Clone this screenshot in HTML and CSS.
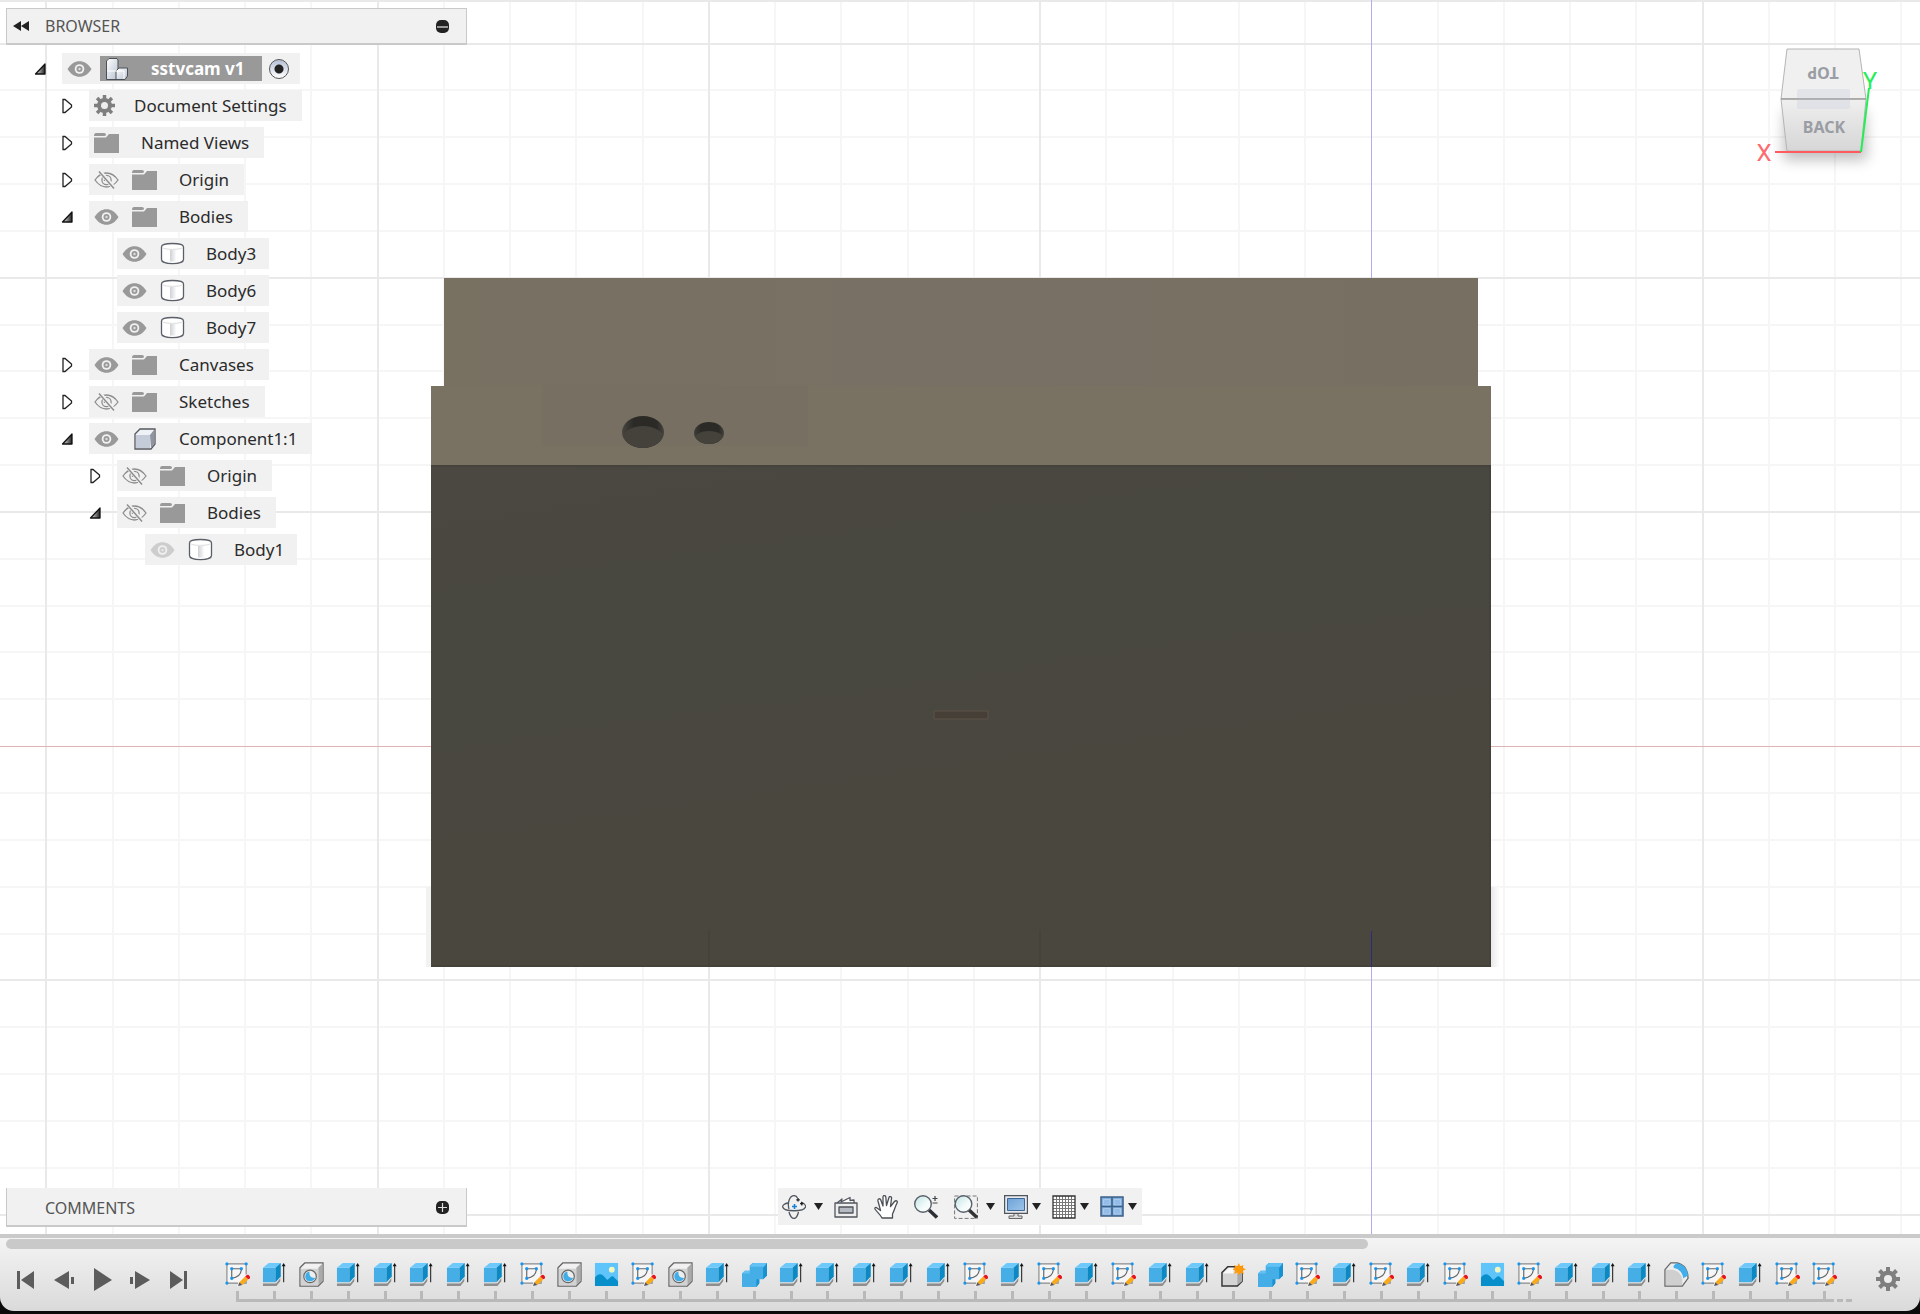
FILE: index.html
```html
<!DOCTYPE html>
<html lang="en">
<head>
<meta charset="utf-8">
<title>sstvcam v1</title>
<link rel="stylesheet" href="styles.css">
</head>
<body>
<svg class="sprite" aria-hidden="true">
  <defs>
    <linearGradient id="steel" x1="0" y1="0" x2="1" y2="1"><stop offset="0" stop-color="#fff"/><stop offset="1" stop-color="#b9c2d0"/></linearGradient>
    <linearGradient id="can" x1="0" x2="1"><stop offset="0" stop-color="#fff"/><stop offset=".25" stop-color="#fff"/><stop offset=".3" stop-color="#d0d2d6"/><stop offset=".75" stop-color="#fff"/></linearGradient>
    <linearGradient id="ink" x1="0" x2="1"><stop offset="0" stop-color="#eee"/><stop offset="1" stop-color="#222"/></linearGradient>
    <linearGradient id="screen" x1="0" y1="0" x2="1" y2="1"><stop offset="0" stop-color="#6fa3d8"/><stop offset="1" stop-color="#9cc4ea"/></linearGradient>
    <linearGradient id="lens" x1="0" y1="0" x2="1" y2="1"><stop offset="0" stop-color="#bfe3e3"/><stop offset=".6" stop-color="#f4fbfb"/><stop offset="1" stop-color="#fff"/></linearGradient>
  </defs>
  <symbol id="closed" viewBox="0 0 12 16"><path d="M2 1.500V14.500H4L10.500 9V7L4 1.500Z" fill="#fff" stroke="#222" stroke-width="1.3"/></symbol>
  <symbol id="open" viewBox="0 0 12 16"><path d="M11 3V13H1.500Z" fill="url(#ink)" stroke="#111" stroke-width="1.3" stroke-linejoin="round"/></symbol>
  <symbol id="eye" viewBox="0 0 25 18"><path d="M.5 9C4 3.500 8 1.200 12.500 1.200S21 3.500 24.500 9C21 14.500 17 16.800 12.500 16.800S4 14.500.5 9Z" fill="#999"/><circle cx="12.500" cy="9" r="4.800" fill="#f1f1f1"/><circle cx="12.500" cy="9" r="3" fill="#999"/><circle cx="12.500" cy="9" r="1.200" fill="#ddd"/></symbol>
  <symbol id="eye-off" viewBox="0 0 25 18"><g fill="none" stroke="#8d8d8d" stroke-width="1.3"><path d="M1 9C4.500 4 8 2 12.500 2S20.500 4 24 9C20.500 14 17 16 12.500 16S4.500 14 1 9Z"/><circle cx="12.500" cy="9" r="4.600"/><path d="M10.500 10V8.500L12 7H13.500"/><path d="M6 0.500L20 17" stroke="#f1f1f1" stroke-width="4"/><path d="M5 .5L20 17.500" stroke-width="1.500"/></g></symbol>
  <symbol id="folder" viewBox="0 0 25 20"><path d="M0 3Q0 0 2 0H10Q12 0 12 1.500T10 3Z" fill="#999"/><path d="M0 4.500H12L15 1H25V20H0Z" fill="#999"/></symbol>
  <symbol id="gear" viewBox="0 0 24 24"><g fill="#7f7f7f"><path id="t" d="M10 0H14V24H10Z"/><use href="#t" transform="rotate(45 12 12)"/><use href="#t" transform="rotate(90 12 12)"/><use href="#t" transform="rotate(135 12 12)"/><circle cx="12" cy="12" r="8.500"/></g><circle cx="12" cy="12" r="4" fill="#ededed"/></symbol>
  <symbol id="body" viewBox="0 0 25 24"><path d="M1.500 5C1.500 .3 23.500 .3 23.500 5V17.500C23.500 23 1.500 23 1.500 17.500Z" fill="#fff" stroke="#5b6068" stroke-width="1.300"/><path d="M6 8H20V19.500H6Z" fill="url(#can)"/><path d="M2.500 5.500C4 8 21 8 22.500 5.500" fill="none" stroke="#ddd"/></symbol>
  <symbol id="component" viewBox="0 0 22 22"><path d="M1 6L6 1H21V16L17 21H1Z" fill="#eef1f6" stroke="#55585d" stroke-width="1.300"/><path d="M2 7H16V20H2Z" fill="#c5ccd9"/><path d="M16 7L20 2V16L17 20Z" fill="#8f959e"/></symbol>
  <symbol id="assembly" viewBox="0 0 24 24"><g stroke="#4b5058" stroke-linejoin="round"><path d="M1.500 4L4 1.500H12L13 3V20L11 22.500H1.500Z" fill="url(#steel)"/><path d="M11 14L14 11H22.500V19L20 22.500H11Z" fill="url(#steel)"/></g><path d="M2 14H11M11 14H19V22" fill="none" stroke="#fff"/></symbol>
  <symbol id="caret" viewBox="0 0 9 7"><path d="M0 0H9L4.500 7Z" fill="#222"/></symbol>
  <symbol id="orbit" viewBox="0 0 24 24"><g fill="none" stroke="#4f565e" stroke-width="1.300"><path d="M19 7C22.500 8.500 24 10 23.500 12C22 17 2 17 .7 12C.3 10 3 8.500 6 8"/><path d="M7 17C8 20.500 9.500 23.500 12 23.500S15.500 21 16.500 17M7 14C5 7 8 .6 12 .6C14 .6 15 2 15.500 3"/></g><path d="M12.500 9V14M10 11.500H15" stroke="#1684d8" stroke-width="1.600"/><path d="M16 3V6.500M14.300 4.800H17.800M19.800 7V10.500M18 8.700H21.500" stroke="#1d2126" stroke-width="1.300"/></symbol>
  <symbol id="look" viewBox="0 0 24 24"><g stroke="#50555c" stroke-width="1.300" stroke-linejoin="round"><path d="M3 8L8 4L7 7L16 2.500V5.500L20 5V8" fill="#fff"/><path d="M1 8H23V22H1Z" fill="#eee"/><path d="M5 12H19V18H5Z" fill="#b5bac3"/></g></symbol>
  <symbol id="hand" viewBox="0 0 24 24"><path d="M8 23C6 19 3 17 1 14C.5 12.500 2 12 3 13L6.500 15.500L4 6C3.500 3.500 6 3 6.800 5L9 11L9 2C9 0 11.500 0 11.800 2L12.500 10.500L15 2.500C15.500 .8 18 1.500 17.500 3.500L16.500 11.500L20.500 6.500C22 5 24 6 23 8C21 12 20.500 15 18.500 19V23Z" fill="#fff" stroke="#4b5056" stroke-width="1.300" stroke-linejoin="round"/></symbol>
  <symbol id="zoom" viewBox="0 0 24 24"><path d="M15 15L23 22.500" stroke="#2c2f33" stroke-width="3.500"/><circle cx="9" cy="9" r="8.300" fill="url(#lens)" stroke="#59616a" stroke-width="1.400"/><path d="M21 1V6M18.500 3.500H23.500M18.500 8H23.500" stroke="#444" stroke-width="1.200"/></symbol>
  <symbol id="fit" viewBox="0 0 24 24"><path d="M.6 1H23.400V23.400H.6Z" fill="none" stroke="#777" stroke-dasharray="4 2"/><path d="M15 15L23 22.500" stroke="#333" stroke-width="3.500"/><circle cx="9.500" cy="9" r="8.300" fill="url(#lens)" stroke="#59616a" stroke-width="1.400"/></symbol>
  <symbol id="display" viewBox="0 0 24 24"><path d="M10 18H14V21H18V23.500H5V21H10Z" fill="#ddd" stroke="#666"/><path d="M.6 .6H23.400V18.400H.6Z" fill="#e7e9ec" stroke="#50555c" stroke-width="1.200"/><path d="M3.500 3.500H20.500V15.500H3.500Z" fill="url(#screen)" stroke="#3c6695"/></symbol>
  <symbol id="grid" viewBox="0 0 24 24"><path d="M1 1H23V23H1Z" fill="#fff"/><path d="M4.500 1V23M7.500 1V23M10.500 1V23M13.500 1V23M16.500 1V23M19.500 1V23M1 4.500H23M1 7.500H23M1 10.500H23M1 13.500H23M1 16.500H23M1 19.500H23" stroke="#777"/><path d="M1 1H23V23H1Z" fill="none" stroke="#333" stroke-width="1.300"/></symbol>
  <symbol id="views" viewBox="0 0 24 22"><path d="M1 1H23V20H1Z" fill="#82aedc" stroke="#3b5f86" stroke-width="1.500"/><path d="M3.500 3.500H10V9H3.500ZM14 3.500H20.500V9H14ZM3.500 12.500H10V18H3.500ZM14 12.500H20.500V18H14Z" fill="#94bce8" stroke="#b6d2ef" stroke-width=".7"/><path d="M12 1V20M1 10.500H23" stroke="#3b5f86" stroke-width="1.500"/></symbol>
  <symbol id="sketch" viewBox="0 0 26 26"><path d="M2 2H22V22H2Z" fill="#f6f6f6" stroke="#8a8a8a" stroke-width="1.200"/><path d="M7 7H17C17 12 14 16 7 17Z" fill="none" stroke="#666" stroke-width="1.200"/><path d="M1 1H3V3H1ZM21 1H23V3H21ZM1 21H3V23H1ZM6 6H8V8H6ZM16 6H18V8H16ZM6 16H8V18H6Z" fill="#1595ee" stroke="#1595ee"/><path d="M22 12.500L25.500 16L17 24L12.500 26L14 21Z" fill="#f6f6f6"/><path d="M15 21L21 15L24 18.500L18 24Z" fill="#f9a91a"/><path d="M21 15Q23.500 12 25.500 14.500T24 18Z" fill="#e8121c"/><path d="M15 21L18 24L13.500 25Z" fill="#555"/></symbol>
  <symbol id="extrude" viewBox="0 0 26 26"><path d="M1 22L14 22L19 16V20L15 25H1Z" fill="#8e8e8e"/><path d="M1 20H14L19 15V17L15 22H1Z" fill="#e2e2e2"/><path d="M1 6H14V21H1Z" fill="#45aee6"/><path d="M1 6L7 1H19.500L14 6Z" fill="#6dc9fb"/><path d="M14 6L19.500 1V15L14 21Z" fill="#0b89c4"/><path d="M22.500 3V21" stroke="#333" stroke-width="1.200"/><path d="M20.500 4.500L22.500 1L24.500 4.500Z" fill="#111"/></symbol>
  <symbol id="hole" viewBox="0 0 26 26"><path d="M1 6L6 1H25V20L20 25H1Z" fill="#f1f1f1" stroke="#666" stroke-width="1.300"/><path d="M20 6L24.300 1.800V20L20 24.300Z" fill="#aaa"/><path d="M2 7H20V24.300H2Z" fill="#d2d2d2"/><circle cx="11.500" cy="15" r="6.500" fill="#eee" stroke="#666" stroke-width="1.200"/><path d="M11 9.800C10 14 13 17 17 16.500C15 22 6.500 21 6.500 15C6.500 12 8.500 10 11 9.800Z" fill="#41ade8"/></symbol>
  <symbol id="canvas" viewBox="0 0 26 26"><path d="M1 1H25V25H1Z" fill="#5ec4fa"/><path d="M1 16C5 12 8 11 13 18C15 20 17 14 20 15L25 20V25H1Z" fill="#078fcb"/><circle cx="18.500" cy="8" r="3" fill="#f2f7c2"/></symbol>
  <symbol id="combine" viewBox="0 0 26 26"><path d="M0 12L3 9H8V4L11 1H26V14L22 18H18V22L15 26H0Z" fill="#46aee7"/><path d="M8 5L12 1H26L23 5ZM0 12L3 9H8V12Z" fill="#62c2f6"/><path d="M23 5L26 1V14L22 18V6ZM15 18H18V22L15 26Z" fill="#1592cf"/></symbol>
  <symbol id="new" viewBox="0 0 26 26"><path d="M1 11L7 5H22V20L17 25H1Z" fill="#d4d4d4" stroke="#333" stroke-width="1.500"/><path d="M2 12L8 6H13V12Z" fill="#f8f8f8"/><path d="M17 12L22 10V20L17 24Z" fill="#aaa"/><path d="M18.500 1L20 4.500L23.500 3L22.500 6L26 7.500L22.500 9L24 12.500L20.500 11L18.500 14L17 11L13.500 12.500L15 9L12 7.500L15 6L13.500 3L17 4.500Z" fill="#ff9a08"/></symbol>
  <symbol id="fillet" viewBox="0 0 26 26"><path d="M1 8L7 1H14Q25 4 25 17L19 25H1Z" fill="#eee" stroke="#666" stroke-width="1.300"/><path d="M2 8H9Q18 10 19 18V24H2Z" fill="#cfcfcf"/><path d="M10 4L13 1Q24 3 25 14L20 17Q19 8 10 6Z" fill="#42aeea"/></symbol>
  <symbol id="start" viewBox="0 0 20 24"><path d="M1 3H4V21H1ZM18 3V21L5 12Z" fill="#5c5c5c"/></symbol>
  <symbol id="prev" viewBox="0 0 20 24"><path d="M15 3V21L0 12ZM17 9H20V16H17Z" fill="#5c5c5c"/></symbol>
  <symbol id="play" viewBox="0 0 20 24"><path d="M2 0V23L20 12Z" fill="#5c5c5c"/></symbol>
  <symbol id="next" viewBox="0 0 20 24"><path d="M5 3V21L20 12ZM0 9H3V16H0Z" fill="#5c5c5c"/></symbol>
  <symbol id="end" viewBox="0 0 20 24"><path d="M16 3H19V21H16ZM2 3V21L15 12Z" fill="#5c5c5c"/></symbol>
</svg>

<main class="workspace">
  <svg class="scene" viewBox="0 0 1920 1234" preserveAspectRatio="xMidYMin slice" role="img" aria-label="Model viewport">
    <defs>
      <linearGradient id="front" x1="0" y1="0" x2=".3" y2="1"><stop offset="0" stop-color="#4a4840"/><stop offset=".3" stop-color="#484740"/><stop offset=".5" stop-color="#484740"/><stop offset=".7" stop-color="#4a473f"/><stop offset="1" stop-color="#4a473f"/></linearGradient>
      <linearGradient id="upper" x1="0" x2="1"><stop offset="0" stop-color="#787162"/><stop offset=".5" stop-color="#787064"/><stop offset="1" stop-color="#776f61"/></linearGradient>
      <linearGradient id="wall" x1="0" x2="1"><stop offset="0" stop-color="#4c4a45"/><stop offset=".3" stop-color="#2b2a26"/><stop offset=".8" stop-color="#2b2a26"/><stop offset="1" stop-color="#4c4a45"/></linearGradient>
      <linearGradient id="shade" x1="0" x2="1"><stop offset="0" stop-color="#e9e9e9"/><stop offset="1" stop-color="#fff"/></linearGradient>
      <clipPath id="big"><ellipse cx="643" cy="432" rx="21" ry="16"/></clipPath>
      <clipPath id="small"><ellipse cx="709" cy="433" rx="15" ry="11"/></clipPath>
    </defs>
    <path class="minor" d="M113 0V1234M179 0V1234M245 0V1234M311 0V1234M444 0V1234M510 0V1234M576 0V1234M643 0V1234M775 0V1234M841 0V1234M908 0V1234M974 0V1234M1106 0V1234M1173 0V1234M1239 0V1234M1305 0V1234M1438 0V1234M1504 0V1234M1570 0V1234M1636 0V1234M1769 0V1234M1835 0V1234M1901 0V1234M0 90H1920M0 137H1920M0 184H1920M0 231H1920M0 325H1920M0 371H1920M0 418H1920M0 465H1920M0 559H1920M0 606H1920M0 652H1920M0 699H1920M0 793H1920M0 840H1920M0 887H1920M0 934H1920M0 1027H1920M0 1074H1920M0 1121H1920M0 1168H1920"/>
    <path class="major" d="M46 0V1234M378 0V1234M709 0V1234M1040 0V1234M1703 0V1234M0 1H1920M0 44H1920M0 278H1920M0 512H1920M0 980H1920M0 1215H1920"/>
    <path class="axis-z" d="M1371 0V1234"/>
    <path class="axis-x" d="M0 746H1920"/>
    <path d="M1491 887H1500V967H1491Z" fill="url(#shade)"/>
    <path d="M426 887H431V967H426Z" fill="#f2f2f2"/>
    <path d="M444 278H1478V387H444Z" fill="url(#upper)"/>
    <path d="M431 386H1491V465H431Z" fill="#797263"/>
    <path d="M542 385H808V446H542Z" fill="#777062"/>
    <path d="M431 465H1491V967H431Z" fill="url(#front)"/>
    <path d="M431 466H1491M1490 465V967M431 966H1491" fill="none" stroke="#403e36"/>
    <g clip-path="url(#big)"><path d="M620 415H666V450H620Z" fill="url(#wall)"/><ellipse cx="643" cy="442" rx="23" ry="16" fill="#45413b"/></g>
    <g clip-path="url(#small)"><path d="M690 415H726V450H690Z" fill="url(#wall)"/><ellipse cx="709" cy="442" rx="17" ry="11" fill="#45413b"/></g>
    <path d="M934 711H988V719H934Z" fill="#463f38" stroke="#5c5347"/>
    <path d="M709 930V966M1040 930V966" stroke="#434039"/>
    <path class="origin" d="M1371 931V967"/>
  </svg>

  <div class="top">
    <section class="browser">
      <header class="panel">
        <button class="plain collapse" aria-label="Collapse browser"><svg width="16" height="10" viewBox="0 0 16 10"><path d="M8 0V10L0 5ZM16 0V10L8 5Z" fill="#222"/></svg></button>
        <h2>BROWSER</h2>
        <button class="plain toggle" aria-label="Hide browser"><svg width="13" height="13" viewBox="0 0 13 13"><rect width="13" height="13" rx="5" fill="#222"/><path d="M1 6H12V8H1Z" fill="#999"/></svg></button>
      </header>
      <ul class="tree">
        <li class="row"><button class="plain arrow" aria-label="Collapse"><svg><use href="#open"/></svg></button>
          <div class="pill root"><button class="plain eye" aria-label="Hide"><svg><use href="#eye"/></svg></button><span class="selected"><svg class="assembly"><use href="#assembly"/></svg>sstvcam v1</span><input type="radio" checked aria-label="Activate sstvcam v1"></div></li>
        <li class="row l1"><button class="plain arrow" aria-label="Expand"><svg><use href="#closed"/></svg></button>
          <div class="pill"><svg class="cog"><use href="#gear"/></svg><span>Document Settings</span></div></li>
        <li class="row l1"><button class="plain arrow" aria-label="Expand"><svg><use href="#closed"/></svg></button>
          <div class="pill"><svg class="folder"><use href="#folder"/></svg><span>Named Views</span></div></li>
        <li class="row l1"><button class="plain arrow" aria-label="Expand"><svg><use href="#closed"/></svg></button>
          <div class="pill"><button class="plain eye" aria-label="Show"><svg><use href="#eye-off"/></svg></button><svg class="folder"><use href="#folder"/></svg><span>Origin</span></div></li>
        <li class="row l1"><button class="plain arrow" aria-label="Collapse"><svg><use href="#open"/></svg></button>
          <div class="pill"><button class="plain eye" aria-label="Hide"><svg><use href="#eye"/></svg></button><svg class="folder"><use href="#folder"/></svg><span>Bodies</span></div></li>
        <li class="row l2 leaf"><div class="pill"><button class="plain eye" aria-label="Hide"><svg><use href="#eye"/></svg></button><svg class="body"><use href="#body"/></svg><span>Body3</span></div></li>
        <li class="row l2 leaf"><div class="pill"><button class="plain eye" aria-label="Hide"><svg><use href="#eye"/></svg></button><svg class="body"><use href="#body"/></svg><span>Body6</span></div></li>
        <li class="row l2 leaf"><div class="pill"><button class="plain eye" aria-label="Hide"><svg><use href="#eye"/></svg></button><svg class="body"><use href="#body"/></svg><span>Body7</span></div></li>
        <li class="row l1"><button class="plain arrow" aria-label="Expand"><svg><use href="#closed"/></svg></button>
          <div class="pill"><button class="plain eye" aria-label="Hide"><svg><use href="#eye"/></svg></button><svg class="folder"><use href="#folder"/></svg><span>Canvases</span></div></li>
        <li class="row l1"><button class="plain arrow" aria-label="Expand"><svg><use href="#closed"/></svg></button>
          <div class="pill"><button class="plain eye" aria-label="Show"><svg><use href="#eye-off"/></svg></button><svg class="folder"><use href="#folder"/></svg><span>Sketches</span></div></li>
        <li class="row l1"><button class="plain arrow" aria-label="Collapse"><svg><use href="#open"/></svg></button>
          <div class="pill"><button class="plain eye" aria-label="Hide"><svg><use href="#eye"/></svg></button><svg class="component"><use href="#component"/></svg><span>Component1:1</span></div></li>
        <li class="row l2"><button class="plain arrow" aria-label="Expand"><svg><use href="#closed"/></svg></button>
          <div class="pill"><button class="plain eye" aria-label="Show"><svg><use href="#eye-off"/></svg></button><svg class="folder"><use href="#folder"/></svg><span>Origin</span></div></li>
        <li class="row l2"><button class="plain arrow" aria-label="Collapse"><svg><use href="#open"/></svg></button>
          <div class="pill"><button class="plain eye" aria-label="Show"><svg><use href="#eye-off"/></svg></button><svg class="folder"><use href="#folder"/></svg><span>Bodies</span></div></li>
        <li class="row l3 leaf"><div class="pill"><button class="plain eye dim" aria-label="Hide"><svg><use href="#eye"/></svg></button><svg class="body"><use href="#body"/></svg><span>Body1</span></div></li>
      </ul>
    </section>

    <svg class="cube" width="140" height="160" viewBox="0 0 140 160" role="img" aria-label="View cube">
      <defs><linearGradient id="back" x1="0" y1="0" x2="0" y2="1"><stop offset="0" stop-color="#efefef"/><stop offset="1" stop-color="#d6d6d6"/></linearGradient>
      <filter id="soft" x="-30%" y="-30%" width="160%" height="160%"><feGaussianBlur stdDeviation="7"/></filter></defs>
      <path d="M40 80H120L122 130H38Z" fill="#000" opacity=".25" filter="url(#soft)"/>
      <path d="M42 19H114L121 69H36Z" fill="#f0f0f0" stroke="#b5b5b5"/>
      <path d="M36 69H121L116 121H42Z" fill="url(#back)" stroke="#b5b5b5"/>
      <rect x="52" y="59" width="53" height="20" rx="2" fill="#d5d7e2" opacity=".5"/>
      <path d="M36 69H121" stroke="#8e8e8e"/>
      <text class="face" x="78" y="37" transform="rotate(180 78 37)">TOP</text>
      <text class="face" x="79" y="103">BACK</text>
      <path d="M30 122H116" stroke="#ff5a5f" stroke-width="2"/>
      <path d="M116 122L124 58" stroke="#23ee55" stroke-width="2"/>
      <text class="axis" x="19" y="131" fill="#ff6a6e">X</text>
      <text class="axis" x="125" y="59" fill="#23ee55">Y</text>
    </svg>
  </div>

  <div class="dock">
    <section class="panel comments"><h2>COMMENTS</h2>
      <button class="plain toggle" aria-label="Show comments"><svg width="13" height="13" viewBox="0 0 13 13"><rect width="13" height="13" rx="5" fill="#222"/><path d="M6.500 2V11M2 6.500H11" stroke="#ddd" stroke-width="1.200"/></svg></button></section>
    <nav class="tools" aria-label="Navigation">
      <button class="plain menu wide" aria-label="Orbit"><svg><use href="#orbit"/></svg><svg class="caret"><use href="#caret"/></svg></button>
      <button class="plain" aria-label="Look at"><svg><use href="#look"/></svg></button>
      <button class="plain" aria-label="Pan"><svg><use href="#hand"/></svg></button>
      <button class="plain" aria-label="Zoom"><svg><use href="#zoom"/></svg></button>
      <button class="plain menu wide" aria-label="Fit"><svg><use href="#fit"/></svg><svg class="caret"><use href="#caret"/></svg></button>
      <button class="plain menu" aria-label="Display settings"><svg><use href="#display"/></svg><svg class="caret"><use href="#caret"/></svg></button>
      <button class="plain menu" aria-label="Grid and snaps"><svg><use href="#grid"/></svg><svg class="caret"><use href="#caret"/></svg></button>
      <button class="plain menu" aria-label="Viewports"><svg><use href="#views"/></svg><svg class="caret"><use href="#caret"/></svg></button>
    </nav>
  </div>
</main>

<footer class="timeline">
  <div class="track"><div class="thumb"></div></div>
  <div class="strip">
    <div class="playback">
      <button class="plain" aria-label="Go to start"><svg><use href="#start"/></svg></button>
      <button class="plain" aria-label="Step back"><svg><use href="#prev"/></svg></button>
      <button class="plain" aria-label="Play"><svg><use href="#play"/></svg></button>
      <button class="plain" aria-label="Step forward"><svg><use href="#next"/></svg></button>
      <button class="plain" aria-label="Go to end"><svg><use href="#end"/></svg></button>
    </div>
    <ol class="features">
      <li><svg><use href="#sketch"/></svg></li>
      <li><svg><use href="#extrude"/></svg></li>
      <li><svg><use href="#hole"/></svg></li>
      <li><svg><use href="#extrude"/></svg></li>
      <li><svg><use href="#extrude"/></svg></li>
      <li><svg><use href="#extrude"/></svg></li>
      <li><svg><use href="#extrude"/></svg></li>
      <li><svg><use href="#extrude"/></svg></li>
      <li><svg><use href="#sketch"/></svg></li>
      <li><svg><use href="#hole"/></svg></li>
      <li><svg><use href="#canvas"/></svg></li>
      <li><svg><use href="#sketch"/></svg></li>
      <li><svg><use href="#hole"/></svg></li>
      <li><svg><use href="#extrude"/></svg></li>
      <li><svg><use href="#combine"/></svg></li>
      <li><svg><use href="#extrude"/></svg></li>
      <li><svg><use href="#extrude"/></svg></li>
      <li><svg><use href="#extrude"/></svg></li>
      <li><svg><use href="#extrude"/></svg></li>
      <li><svg><use href="#extrude"/></svg></li>
      <li><svg><use href="#sketch"/></svg></li>
      <li><svg><use href="#extrude"/></svg></li>
      <li><svg><use href="#sketch"/></svg></li>
      <li><svg><use href="#extrude"/></svg></li>
      <li><svg><use href="#sketch"/></svg></li>
      <li><svg><use href="#extrude"/></svg></li>
      <li><svg><use href="#extrude"/></svg></li>
      <li><svg><use href="#new"/></svg></li>
      <li><svg><use href="#combine"/></svg></li>
      <li><svg><use href="#sketch"/></svg></li>
      <li><svg><use href="#extrude"/></svg></li>
      <li><svg><use href="#sketch"/></svg></li>
      <li><svg><use href="#extrude"/></svg></li>
      <li><svg><use href="#sketch"/></svg></li>
      <li><svg><use href="#canvas"/></svg></li>
      <li><svg><use href="#sketch"/></svg></li>
      <li><svg><use href="#extrude"/></svg></li>
      <li><svg><use href="#extrude"/></svg></li>
      <li><svg><use href="#extrude"/></svg></li>
      <li><svg><use href="#fillet"/></svg></li>
      <li><svg><use href="#sketch"/></svg></li>
      <li><svg><use href="#extrude"/></svg></li>
      <li><svg><use href="#sketch"/></svg></li>
      <li><svg><use href="#sketch"/></svg></li>
    </ol>
    <div class="tail" aria-hidden="true"></div>
    <button class="plain settings" aria-label="Timeline settings"><svg><use href="#gear"/></svg></button>
  </div>
</footer>
</body>
</html>
```
FILE: styles.css
```css
* { box-sizing: border-box; }

body {
  margin: 0;
  min-height: 100vh;
  display: flex;
  flex-direction: column;
  background: #0b0b0b;
  color: #2b2b2b;
  font: 17px/24px "Noto Sans", "Open Sans", sans-serif;
}

ul, ol { list-style: none; margin: 0; padding: 0; }
svg { display: block; flex: none; }
.sprite { position: absolute; width: 0; height: 0; }

.plain {
  display: flex;
  align-items: center;
  padding: 0;
  border: 0;
  background: none;
  flex: none;
}

/* Viewport */
.workspace {
  position: relative;
  flex: 1;
  display: flex;
  flex-direction: column;
  justify-content: space-between;
  background: #fff;
}
.scene { position: absolute; inset: 0; width: 100%; height: 100%; }
.minor { stroke: #f6f6f6; stroke-width: 2; }
.major { stroke: #e9e9e9; stroke-width: 2; }
.axis-z { stroke: #aeaef0; shape-rendering: crispEdges; }
.axis-x { stroke: #dcb4b4; shape-rendering: crispEdges; }
.origin { stroke: #2f2b7a; shape-rendering: crispEdges; }

.top {
  position: relative;
  display: flex;
  justify-content: space-between;
  align-items: flex-start;
  padding: 8px 35px 0 6px;
}
.cube { margin-top: 22px; }
.face {
  font: bold 16px "Noto Sans", sans-serif;
  fill: #9a9da3;
  text-anchor: middle;
}
.axis { font: 24px Roboto, sans-serif; text-anchor: middle; }

/* Panels */
.panel {
  display: flex;
  align-items: center;
  width: 461px;
  height: 37px;
  padding: 0 17px 0 6px;
  background: #f1f1f1;
  border: 1px solid #c9c9c9;
  border-bottom-width: 2px;
}
.panel h2 {
  margin: 0;
  font: 16px/24px "Noto Sans", sans-serif;
  color: #555;
}
.collapse { width: 32px; }
.toggle { margin-left: auto; }
.comments { height: 39px; border-top: 0; padding-top: 2px; padding-left: 38px; }

/* Browser tree */
.tree {
  display: flex;
  flex-direction: column;
  gap: 6px;
  padding-top: 8px;
}
.row { display: flex; align-items: center; padding-left: 28px; }
.l1 { padding-left: 55px; }
.l2 { padding-left: 83px; }
.l3 { padding-left: 111px; }
.leaf::before { content: ""; width: 28px; }
.arrow { width: 28px; }
.arrow svg { width: 12px; height: 16px; }
.pill {
  display: flex;
  align-items: center;
  height: 31px;
  padding: 0 15px 0 5px;
  background: #f1f1f1;
}
.leaf .pill { padding-right: 13px; }
.eye { margin-right: 13px; }
.eye svg { width: 25px; height: 18px; }
.dim { opacity: .4; }
.folder { width: 25px; height: 20px; margin-right: 22px; }
.body { width: 25px; height: 24px; margin-right: 21px; }
.component { width: 22px; height: 22px; margin: 0 23px 0 2px; }
.cog { width: 21px; height: 21px; margin-right: 19px; }
.root { padding-right: 11px; }
.root .eye { margin-right: 8px; }
.selected {
  display: flex;
  align-items: center;
  height: 25px;
  padding: 0 17px 0 5px;
  background: #999;
  color: #fff;
  font-weight: bold;
}
.assembly { width: 24px; height: 24px; margin-right: 22px; }
.root input {
  appearance: none;
  width: 20px;
  height: 20px;
  margin: 0 0 0 7px;
  border: 1px solid #555;
  border-radius: 50%;
  background: radial-gradient(circle, #222 0 4px, transparent 5px), linear-gradient(#b5c0d6, #fff);
}

/* Bottom dock */
.dock {
  position: relative;
  display: grid;
  grid-template-columns: 1fr auto 1fr;
  align-items: start;
  padding: 0 6px 7px;
}
.tools { display: flex; height: 37px; background: #f1f1f1; }
.tools .plain { padding: 0 8px; }
.tools .menu { gap: 4px; padding: 0 5px 0 6px; }
.tools .wide { gap: 8px; padding: 0 3px 0 4px; }
.tools .plain:not(.menu) + .menu { margin-left: 4px; }
.tools svg { width: 24px; height: 24px; }
.tools .caret { width: 9px; height: 7px; }

/* Timeline */
.timeline {
  margin-bottom: 3px;
  border-top: 4px solid #cacaca;
  border-radius: 0 0 14px 14px;
  background: linear-gradient(#f4f4f4, #dadada);
}
.track { padding: 1px 6px 0; }
.thumb { width: 1362px; max-width: 72%; height: 10px; border-radius: 5px; background: #c9c9c9; }
.strip { display: flex; height: 62px; padding: 13px 20px 0 7px; }
.playback { display: flex; width: 212px; height: 36px; }
.playback .plain { width: 38px; justify-content: center; }
.playback svg { width: 20px; height: 24px; }
.features {
  flex: 1;
  display: grid;
  grid-template-columns: repeat(44, 1fr);
  height: 40px;
  background: linear-gradient(#b9b9b9, #b9b9b9) 18px 100% / calc(100% - 27px) 3px no-repeat;
}
.features li {
  display: flex;
  flex-direction: column;
  align-items: center;
  justify-content: space-between;
}
.features svg { width: 25px; height: 25px; }
.features li::after { content: ""; width: 3px; height: 11px; background: #b9b9b9; }
.tail {
  width: 15px;
  height: 3px;
  margin: 37px 24px 0 -6px;
  background: repeating-linear-gradient(90deg, #b9b9b9 0 6px, transparent 6px 9px);
}
.settings { width: 24px; height: 34px; }
.settings svg { width: 24px; height: 24px; }
```
